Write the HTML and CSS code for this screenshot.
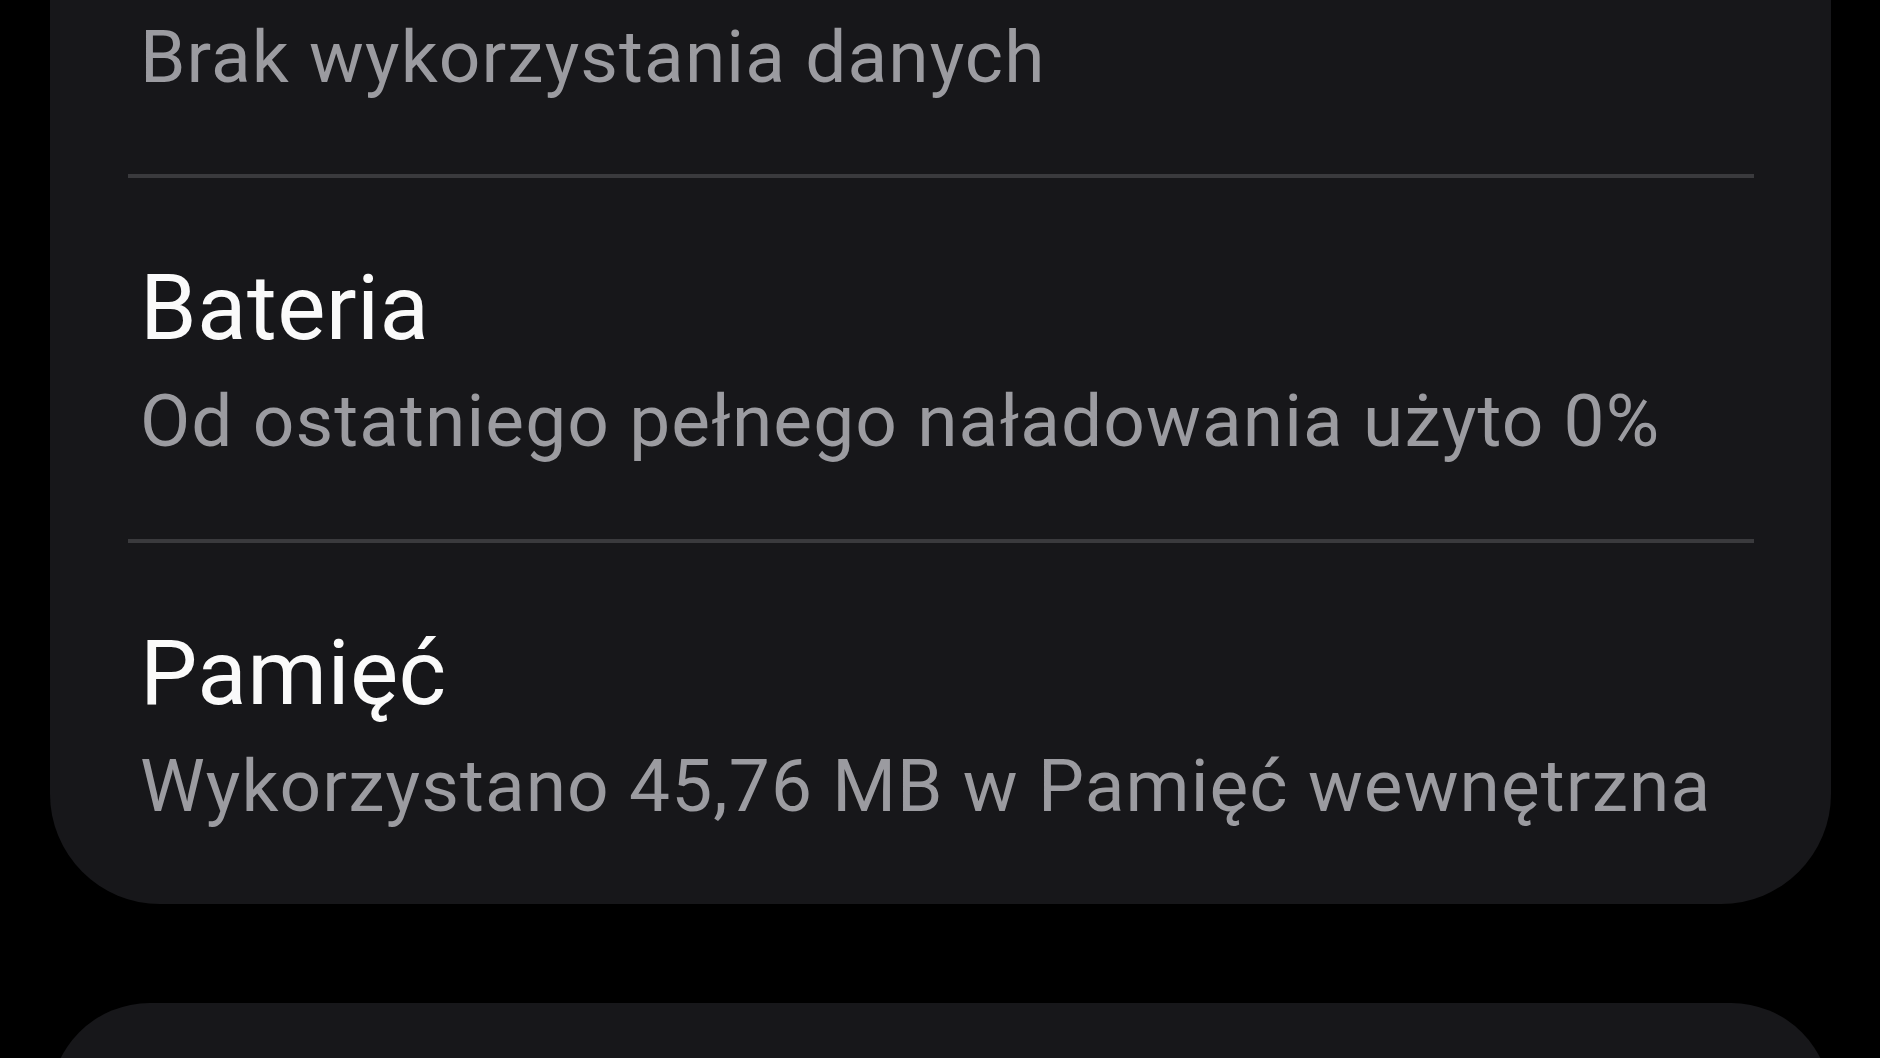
FILE: index.html
```html
<!DOCTYPE html>
<html lang="pl">
<head>
<meta charset="utf-8">
<title>Informacje o aplikacji</title>
<link rel="stylesheet" href="styles.css">
</head>
<body>
<main class="screen">
  <section class="card card-top">
    <div class="row row-first">
      <div class="subtitle">Brak wykorzystania danych</div>
    </div>
    <div class="divider"></div>
    <div class="row">
      <div class="title">Bateria</div>
      <div class="subtitle">Od ostatniego pełnego naładowania użyto 0%</div>
    </div>
    <div class="divider"></div>
    <div class="row row-last">
      <div class="title">Pamięć</div>
      <div class="subtitle">Wykorzystano 45,76 MB w Pamięć wewnętrzna</div>
    </div>
  </section>
  <section class="card card-next"></section>
</main>
</body>
</html>
```
FILE: styles.css
```css
html, body {
  margin: 0;
  padding: 0;
  background: #000;
}
body {
  width: 1880px;
  height: 1058px;
  overflow: hidden;
  font-family: Roboto, "Noto Sans", sans-serif;
}
.screen {
  display: flex;
  flex-direction: column;
  gap: 99px;
  padding: 0 49px 0 50px;
}
.card {
  background: #17171a;
  border-radius: 110px;
}
.card-top {
  border-radius: 0 0 110px 110px;
  display: flex;
  flex-direction: column;
}
.card-next {
  height: 200px;
  flex-shrink: 0;
}
.row {
  display: flex;
  flex-direction: column;
  gap: 13px;
  padding: 75px 90px 73px;
}
.row-first {
  padding-top: 12px;
  padding-bottom: 72px;
}
.row-last {
  padding-bottom: 73px;
}
.title {
  font-size: 91px;
  line-height: 110px;
  color: #fafafa;
  letter-spacing: 0.4px;
  white-space: nowrap;
}
.subtitle {
  font-size: 73px;
  line-height: 90px;
  color: #9b9ba0;
  letter-spacing: 1.1px;
  white-space: nowrap;
}
.divider {
  height: 4px;
  background: #3a3a3d;
  margin: 0 77px 0 78px;
}
```
